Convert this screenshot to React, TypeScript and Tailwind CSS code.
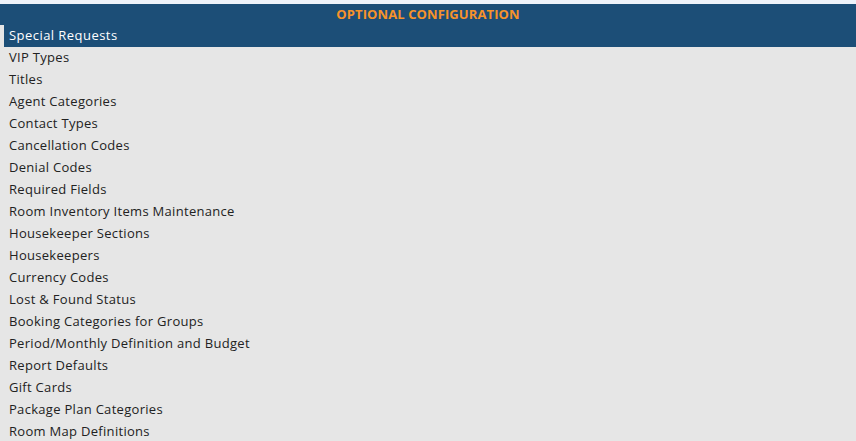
import React from "react";

const items = [
  "VIP Types",
  "Titles",
  "Agent Categories",
  "Contact Types",
  "Cancellation Codes",
  "Denial Codes",
  "Required Fields",
  "Room Inventory Items Maintenance",
  "Housekeeper Sections",
  "Housekeepers",
  "Currency Codes",
  "Lost & Found Status",
  "Booking Categories for Groups",
  "Period/Monthly Definition and Budget",
  "Report Defaults",
  "Gift Cards",
  "Package Plan Categories",
  "Room Map Definitions",
];

export default function App() {
  return (
    <div
      className="w-[856px] h-[441px] overflow-hidden bg-[#eef3fa] pt-[4px]"
      style={{ fontFamily: '"Open Sans", "Liberation Sans", sans-serif' }}
    >
      <div className="bg-[#e6e6e6] h-full">
        <div className="h-[21px] bg-[#1c4e77] flex items-center justify-center text-[13px] font-bold text-[#f7932a] tracking-[0.1px]">
          OPTIONAL CONFIGURATION
        </div>
        <div className="pl-[4px]">
          <div className="h-[22px] bg-[#1c4e77] text-white text-[13px] pl-[5px] flex items-center font-medium tracking-[0.45px]">
            Special Requests
          </div>
        </div>
        {items.map((t) => (
          <div
            key={t}
            className="h-[22px] flex items-center pl-[9px] text-[13px] text-[#222222] tracking-[0.3px]"
          >
            {t}
          </div>
        ))}
      </div>
    </div>
  );
}
